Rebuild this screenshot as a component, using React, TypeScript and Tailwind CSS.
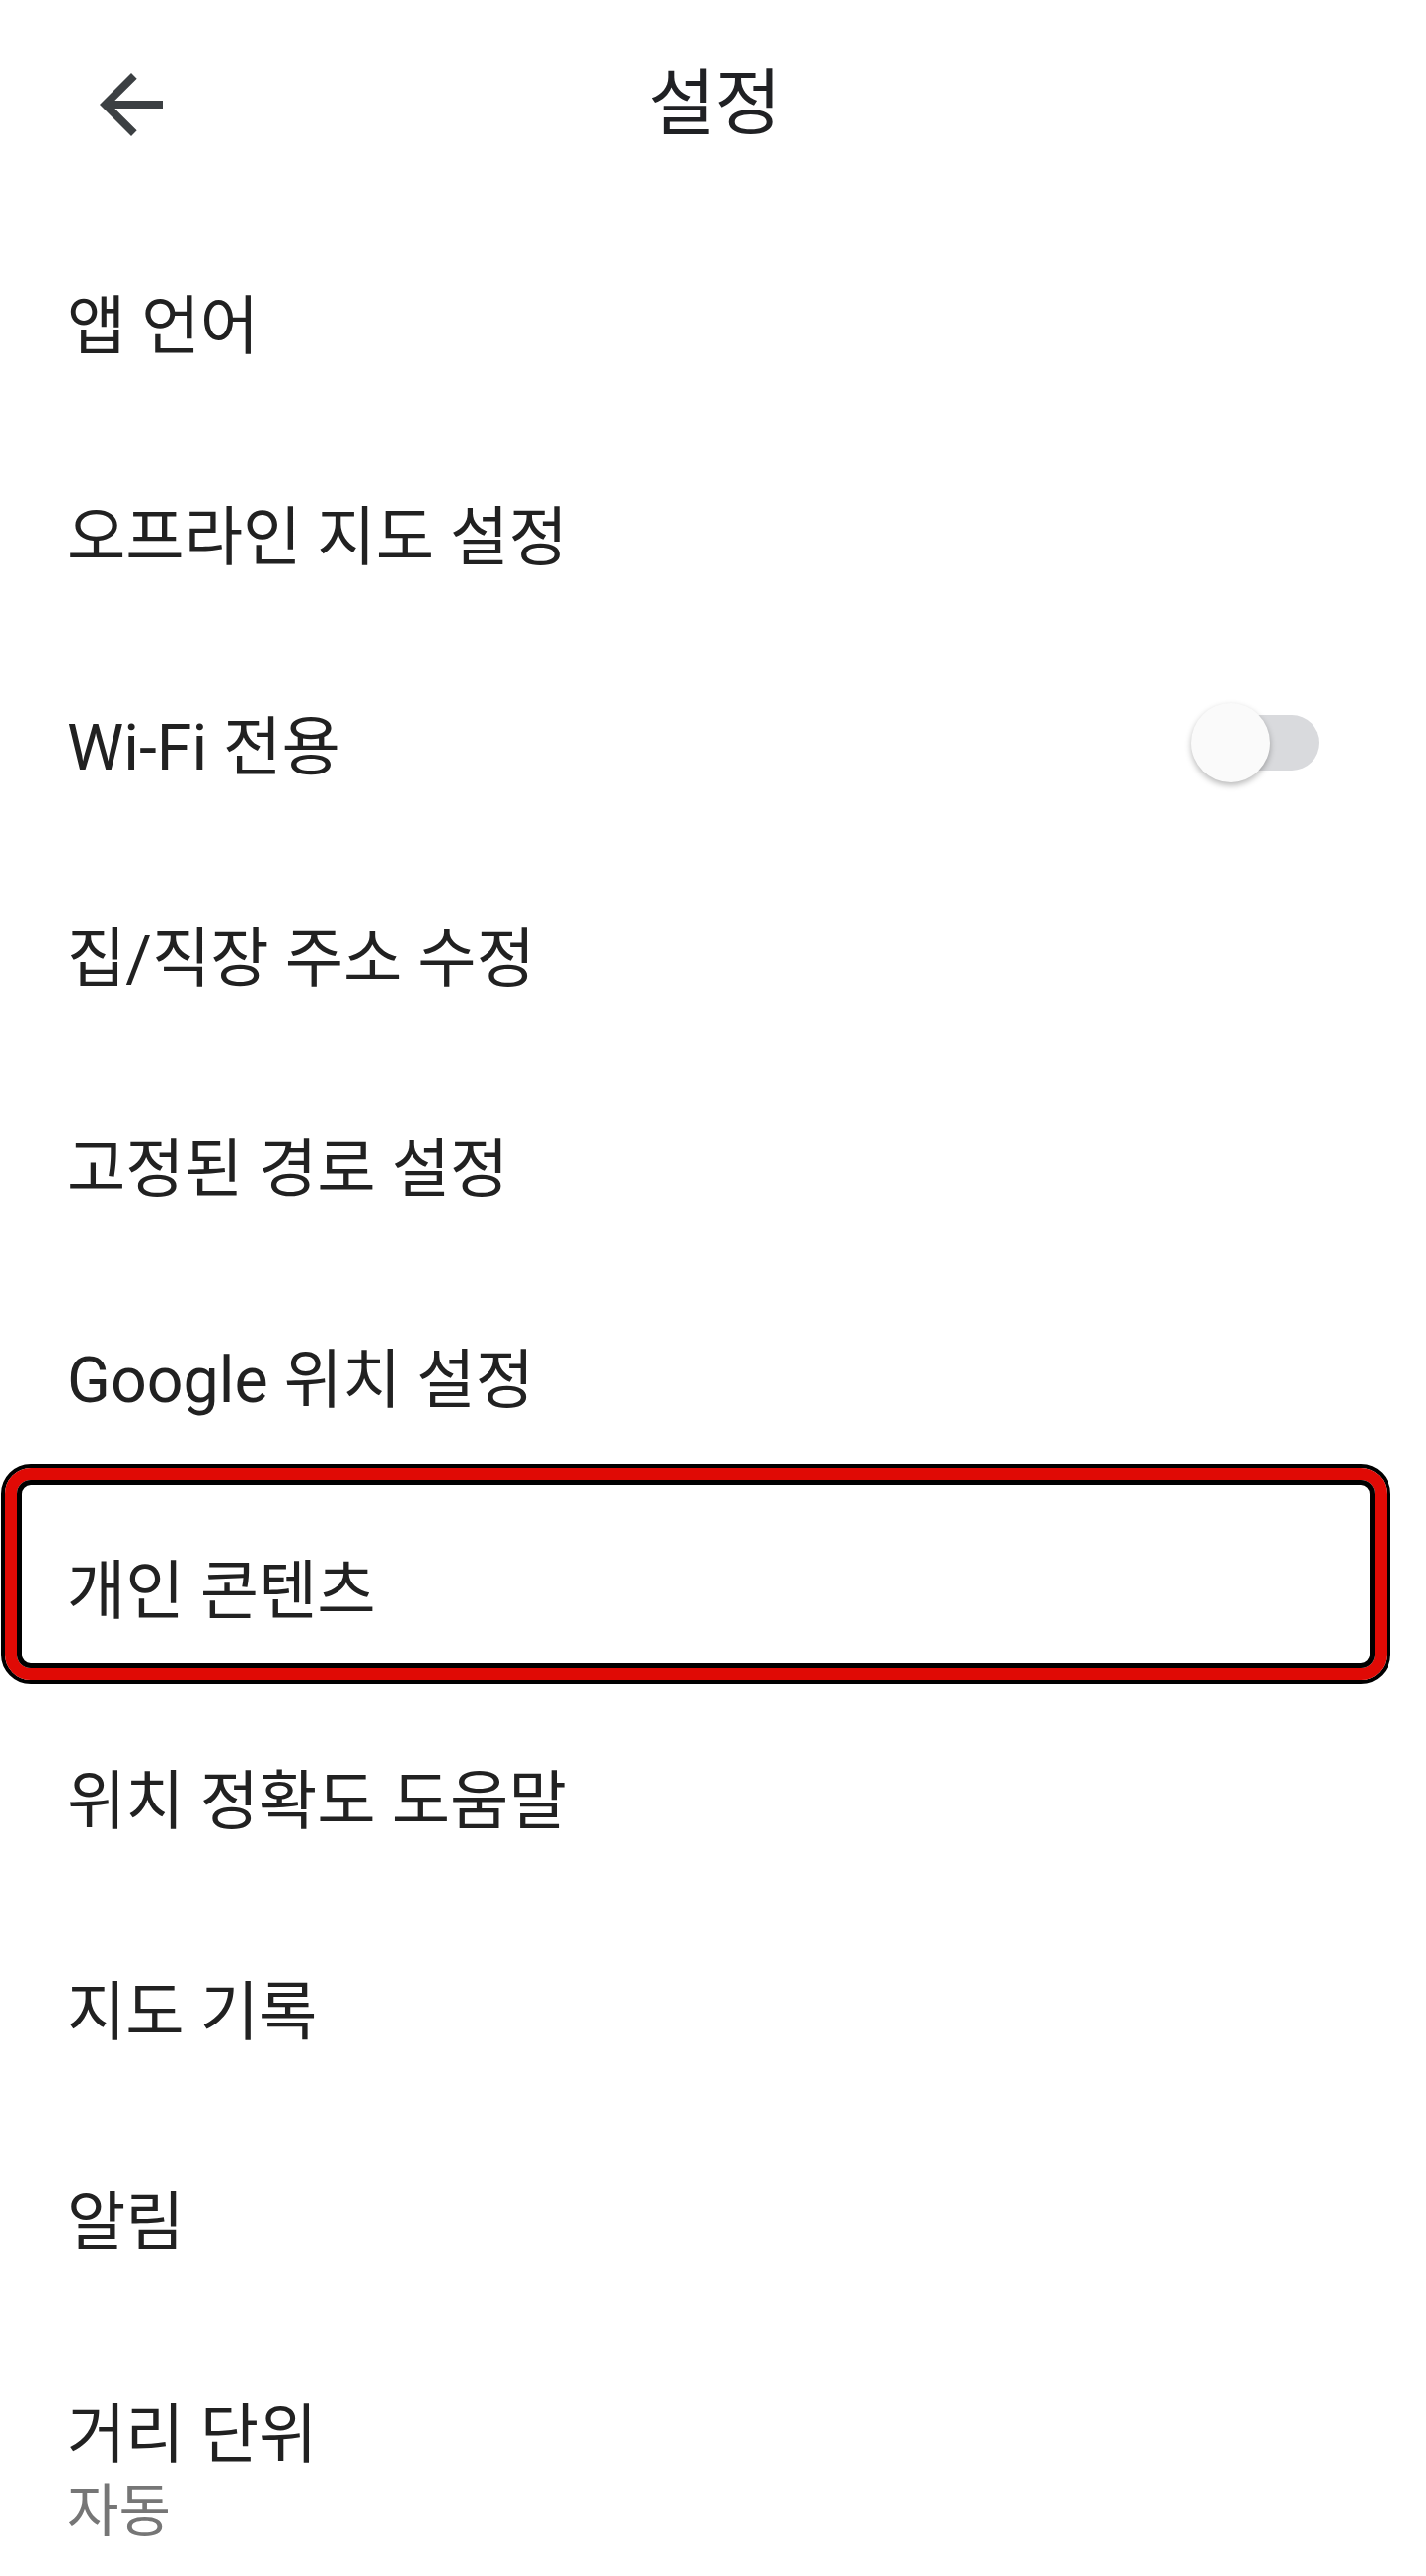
const items = [
  "앱 언어",
  "오프라인 지도 설정",
  "Wi-Fi 전용",
  "집/직장 주소 수정",
  "고정된 경로 설정",
  "Google 위치 설정",
  "개인 콘텐츠",
  "위치 정확도 도움말",
  "지도 기록",
  "알림",
];

function Toggle() {
  return (
    <div className="relative w-[130px] h-[82px] flex items-center">
      <div className="absolute left-[10px] w-[120px] h-[56px] rounded-full bg-[#d9dadd]" />
      <div className="absolute left-0 w-[80px] h-[80px] rounded-full bg-[#fafafa] shadow-[0_3px_6px_rgba(0,0,0,0.28)]" />
    </div>
  );
}

function Highlight() {
  return (
    <div className="pointer-events-none absolute left-[1px] top-[-17px] w-[1408px] h-[223px] rounded-[30px] border-4 border-black">
      <div className="h-full w-full rounded-[26px] border-[12px] border-[#e00a05]">
        <div className="h-full w-full rounded-[14px] border-[5px] border-black" />
      </div>
    </div>
  );
}

export default function App() {
  return (
    <div className="w-[1445px] min-h-[2611px] bg-white text-[#212121] font-['Roboto','Noto_Sans_CJK_KR',sans-serif]">
      <header className="grid grid-cols-[1fr_auto_1fr] items-center h-[219.5px] pb-[8px]">
        <div className="pl-[85px]">
          <svg width="96" height="96" viewBox="0 0 24 24" fill="#3c4043">
            <path d="M20 11H7.83l5.59-5.59L12 4l-8 8 8 8 1.41-1.41L7.83 13H20v-2z" />
          </svg>
        </div>
        <h1 className="text-[73px] leading-none text-[#202124] pl-[4px]">설정</h1>
        <div />
      </header>

      <div>
        {items.map((label) => (
          <div
            key={label}
            className="relative flex items-center justify-between h-[213.6px] pl-[68px] pr-[108px]"
          >
            <span className="text-[64.5px] leading-none pt-[10px]">{label}</span>
            {label === "Wi-Fi 전용" && <Toggle />}
            {label === "개인 콘텐츠" && <Highlight />}
          </div>
        ))}

        <div className="flex flex-col pl-[68px] pt-[74px] pb-[30px]">
          <span className="text-[64.5px] leading-[78px]">거리 단위</span>
          <span className="text-[57px] leading-[78px] text-[#767676]">자동</span>
        </div>
      </div>
    </div>
  );
}
